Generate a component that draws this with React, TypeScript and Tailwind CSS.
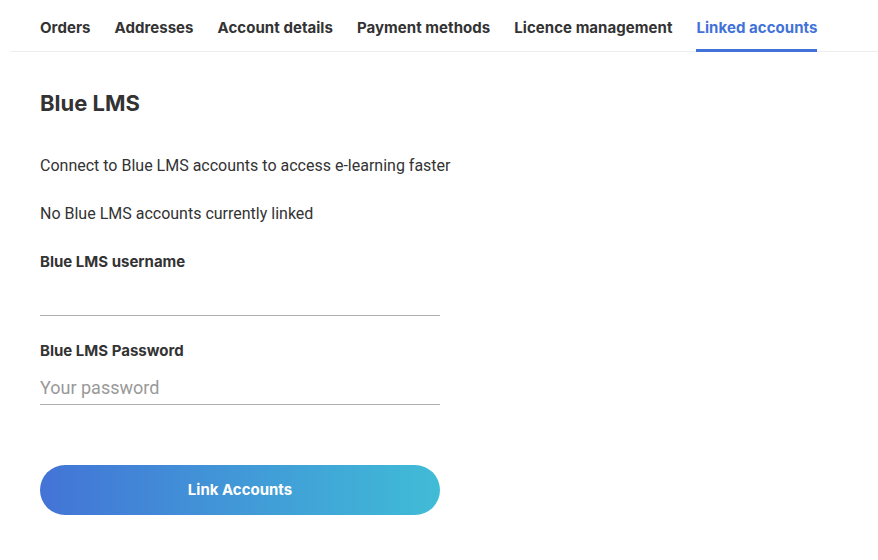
import { useState } from 'react'

const tabs = ['Orders', 'Addresses', 'Account details', 'Payment methods', 'Licence management', 'Linked accounts']

export default function App() {
  const [active] = useState('Linked accounts')

  return (
    <div className="min-h-[560px] w-[878px] bg-white text-[#333]">
      {/* Tabs */}
      <div className="ml-[10px] flex gap-6 border-b border-[#eeeeee] pl-[30px]">
        {tabs.map((t) => (
          <div
            key={t}
            className={
              'pt-[18px] pb-[11px] text-[15px] leading-[20px] font-bold font-["Inter",sans-serif] tracking-[0.05px] border-b-[3px] -mb-px ' +
              (t === active ? 'text-[#4272d7] border-[#4272d7]' : 'text-[#333] border-transparent')
            }
          >
            {t}
          </div>
        ))}
      </div>

      {/* Content */}
      <div className="px-10 pt-[37px]">
        <h2 className="text-[22px] leading-[28px] font-bold font-['Inter',sans-serif] text-[#333]">Blue LMS</h2>
        <p className="mt-[37px] text-[16px] leading-[24px] font-['Roboto',sans-serif] text-[#333]">
          Connect to Blue LMS accounts to access e-learning faster
        </p>
        <p className="mt-[24px] text-[16px] leading-[24px] font-['Roboto',sans-serif] text-[#333]">
          No Blue LMS accounts currently linked
        </p>

        <div className="mt-[26px] w-[400px]">
          <label className="block text-[15px] leading-[20px] font-bold font-['Inter',sans-serif]">Blue LMS username</label>
          <input
            type="text"
            className="mt-[10px] block h-[34px] w-full border-b border-[#b0b0b0] bg-transparent text-[18px] font-['Roboto',sans-serif] outline-none"
          />

          <label className="mt-[25px] block text-[15px] leading-[20px] font-bold font-['Inter',sans-serif]">Blue LMS Password</label>
          <input
            type="password"
            placeholder="Your password"
            className="mt-[10px] block h-[34px] w-full border-b border-[#b0b0b0] bg-transparent text-[18px] font-['Roboto',sans-serif] outline-none placeholder:text-[#999]"
          />

          <button className="mt-[60px] flex h-[50px] w-full items-center justify-center rounded-full bg-gradient-to-r from-[#4373d6] to-[#40bcd6] text-[15px] font-bold text-white font-['Inter',sans-serif]">
            Link Accounts
          </button>
        </div>
      </div>
    </div>
  )
}
